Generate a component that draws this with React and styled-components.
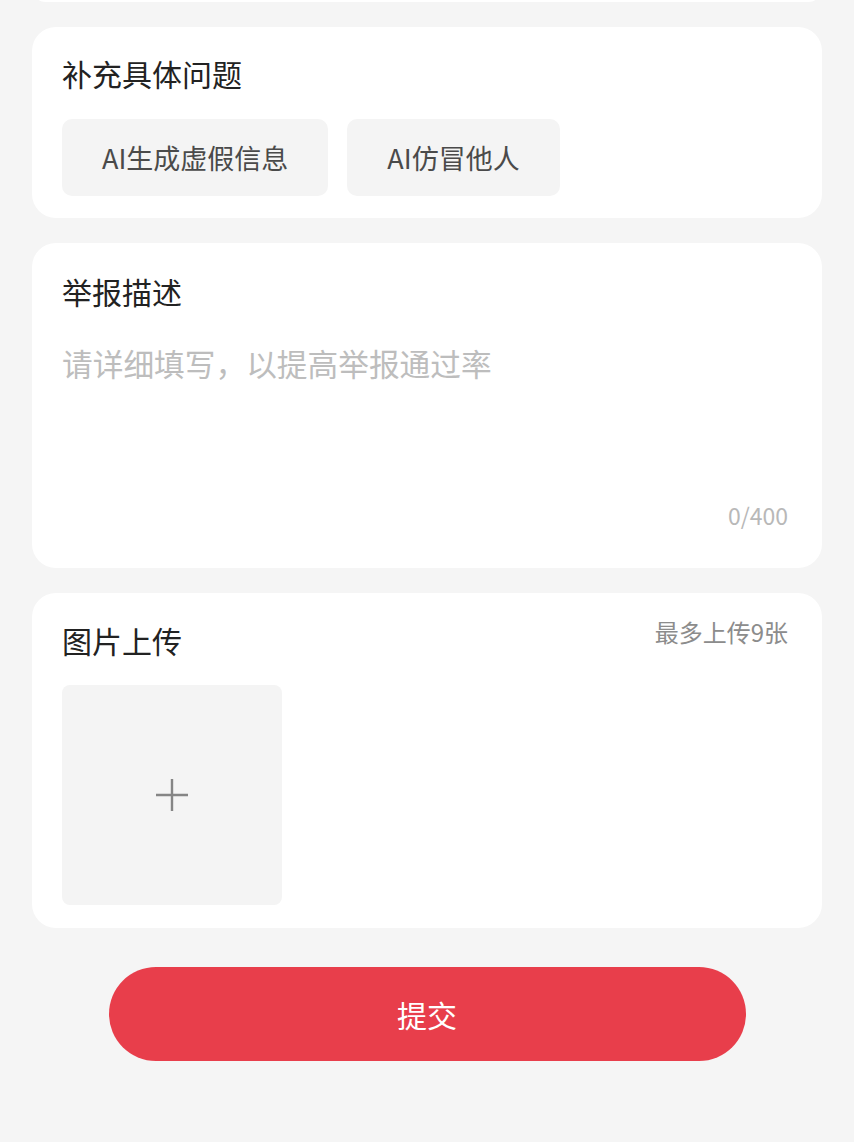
import { useState } from "react";
import styled, { createGlobalStyle } from "styled-components";

const GlobalStyle = createGlobalStyle`
    html, body {
        margin: 0;
        padding: 0;
        background-color: #f5f5f5;
    }
    body {
        font-family: "Noto Sans CJK SC", "Noto Sans", sans-serif;
        -webkit-font-smoothing: antialiased;
    }
`;

const issues = ["AI生成虚假信息", "AI仿冒他人"];
const MAX_LEN = 400;

export default function App() {
    const [selected, setSelected] = useState(null);
    const [text, setText] = useState("");

    return (
        <Page>
            <GlobalStyle />
            <StubCard />

            <Card $pad="26px 30px 22px">
                <Title>补充具体问题</Title>
                <Chips>
                    {issues.map(item => (
                        <Chip
                            key={item}
                            $active={selected === item}
                            onClick={() => setSelected(item)}
                        >
                            {item}
                        </Chip>
                    ))}
                </Chips>
            </Card>

            <Card $pad="28px 34px 38px 30px">
                <Title>举报描述</Title>
                <TextArea
                    value={text}
                    maxLength={MAX_LEN}
                    placeholder="请详细填写，以提高举报通过率"
                    onChange={e => setText(e.target.value)}
                />
                <Counter>{text.length}/{MAX_LEN}</Counter>
            </Card>

            <Card $pad="27px 34px 23px 30px">
                <HeaderRow>
                    <Title>图片上传</Title>
                    <Hint>最多上传9张</Hint>
                </HeaderRow>
                <UploadBox type="button" aria-label="上传图片">
                    <svg width="34" height="34" viewBox="0 0 34 34">
                        <path d="M17 1v32M1 17h32" stroke="#858585" strokeWidth="2.4" fill="none" />
                    </svg>
                </UploadBox>
            </Card>

            <SubmitButton type="button">提交</SubmitButton>
        </Page>
    );
}

const Page = styled.div`
    min-height: 1142px;
    padding: 0 32px;
    box-sizing: border-box;
    display: flex;
    flex-direction: column;
    gap: 25px;
    overflow: hidden;
`;

// bottom edge of the card above, scrolled mostly out of view
const StubCard = styled.div`
    height: 27px;
    margin-top: -25px;
    background-color: #fff;
    border-radius: 24px;
`;

const Card = styled.div`
    background-color: #fff;
    border-radius: 24px;
    padding: ${p => p.$pad};
    display: flex;
    flex-direction: column;
`;

const Title = styled.h3`
    margin: 0;
    font-size: 30px;
    line-height: 40px;
    font-weight: 400;
    color: #222;
`;

const Chips = styled.div`
    display: flex;
    gap: 19px;
    margin-top: 26px;
`;

const Chip = styled.button`
    height: 77px;
    padding: 0 40px;
    border: none;
    border-radius: 10px;
    background-color: ${p => (p.$active ? "#fdecee" : "#f4f4f4")};
    color: ${p => (p.$active ? "#e83e4b" : "#4a4a4a")};
    font-family: inherit;
    font-size: 27px;
    cursor: pointer;
`;

const TextArea = styled.textarea`
    margin-top: 30px;
    height: 159px;
    padding: 0;
    border: none;
    outline: none;
    resize: none;
    font-family: inherit;
    font-size: 30.7px;
    line-height: 44px;
    color: #222;

    &::placeholder {
        color: #bdbdbd;
    }
`;

const Counter = styled.div`
    align-self: flex-end;
    font-size: 23px;
    line-height: 30px;
    color: #b8b8b8;
`;

const HeaderRow = styled.div`
    display: flex;
    justify-content: space-between;
    align-items: flex-start;
`;

const Hint = styled.span`
    font-size: 24px;
    line-height: 24px;
    color: #8c8c8c;
`;

const UploadBox = styled.button`
    margin-top: 25px;
    width: 220px;
    height: 220px;
    border: none;
    border-radius: 8px;
    background-color: #f4f4f4;
    display: flex;
    align-items: center;
    justify-content: center;
    cursor: pointer;
`;

const SubmitButton = styled.button`
    align-self: center;
    margin-top: 14px;
    width: 637px;
    height: 94px;
    border: none;
    border-radius: 47px;
    background-color: #e83e4b;
    color: #fff;
    font-family: inherit;
    font-size: 30px;
    cursor: pointer;
`;
